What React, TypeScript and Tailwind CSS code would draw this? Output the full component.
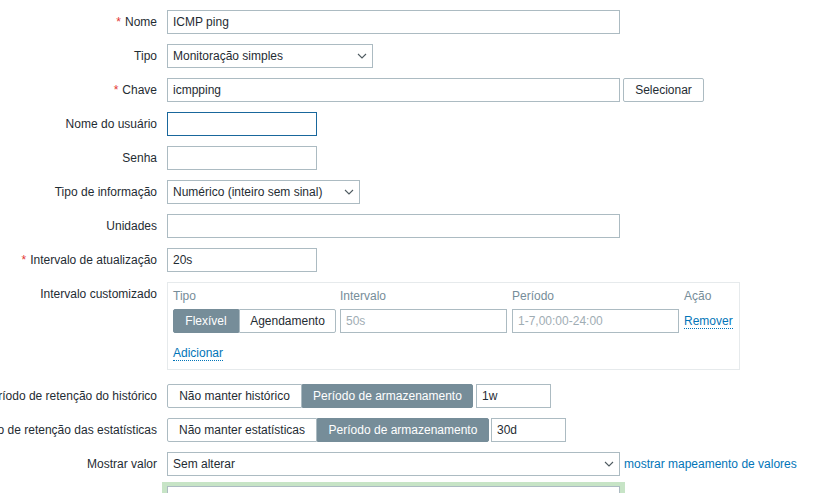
import { ReactNode } from "react";

const Label = ({ text, required }: { text: string; required?: boolean }) => (
  <div className="w-[157px] mr-[10px] h-6 shrink-0 flex items-center justify-end whitespace-nowrap">
    {required && <span className="text-[#e33734] mr-[4px]">*</span>}
    {text}
  </div>
);

const Row = ({ label, required, children, className = "" }: { label: string; required?: boolean; children?: ReactNode; className?: string }) => (
  <div className={`flex items-start ${className}`}>
    <Label text={label} required={required} />
    <div className="flex items-center">{children}</div>
  </div>
);

const TextBox = ({ value = "", w, focused, muted }: { value?: string; w: string; focused?: boolean; muted?: boolean }) => (
  <div
    className={`${w} h-6 bg-white flex items-center px-[5px] border ${
      focused ? "border-[#19679c]" : "border-[#acbbc2]"
    } ${muted ? "text-[#9fadb4]" : ""}`}
  >
    {value}
  </div>
);

const Chevron = () => (
  <svg width="10" height="6" viewBox="0 0 10 6" className="shrink-0">
    <path d="M1 1l4 4 4-4" fill="none" stroke="#4f5b61" strokeWidth="1.1" />
  </svg>
);

const SelectBox = ({ value, w }: { value: string; w: string }) => (
  <div className={`${w} h-6 bg-white border border-[#acbbc2] flex items-center justify-between pl-[5px] pr-[5px]`}>
    <span>{value}</span>
    <Chevron />
  </div>
);

const Segmented = ({ items, active, widths }: { items: string[]; active: number; widths: string[] }) => (
  <div className="flex h-6">
    {items.map((it, i) => (
      <div
        key={it}
        className={`${widths[i]} h-6 flex items-center justify-center border ${
          i === active ? "bg-[#768d99] border-[#768d99] text-white" : "bg-white border-[#acbbc2]"
        } ${i === 0 ? "rounded-l-[2px]" : ""} ${i === items.length - 1 ? "rounded-r-[2px]" : ""}`}
      >
        {it}
      </div>
    ))}
  </div>
);

const Link = ({ children }: { children: ReactNode }) => (
  <span className="text-[#0275b8] border-b border-dotted border-[#0275b8] leading-[14px]">{children}</span>
);

export default function App() {
  return (
    <div className="w-[834px] h-[493px] overflow-hidden bg-white font-['Liberation_Sans',Arial,sans-serif] text-[12px] text-[#1f2c33] pt-[10px] flex flex-col gap-[10px]">
      <Row label="Nome" required>
        <TextBox value="ICMP ping" w="w-[453px]" />
      </Row>
      <Row label="Tipo">
        <SelectBox value="Monitoração simples" w="w-[206px]" />
      </Row>
      <Row label="Chave" required>
        <TextBox value="icmpping" w="w-[453px]" />
        <div className="ml-[3px] w-[81px] h-6 border border-[#acbbc2] rounded-[2px] bg-white flex items-center justify-center">
          Selecionar
        </div>
      </Row>
      <Row label="Nome do usuário">
        <TextBox w="w-[150px]" focused />
      </Row>
      <Row label="Senha">
        <TextBox w="w-[150px]" />
      </Row>
      <Row label="Tipo de informação">
        <SelectBox value="Numérico (inteiro sem sinal)" w="w-[193px]" />
      </Row>
      <Row label="Unidades">
        <TextBox w="w-[453px]" />
      </Row>
      <Row label="Intervalo de atualização" required>
        <TextBox value="20s" w="w-[150px]" />
      </Row>

      {/* custom intervals table */}
      <div className="flex items-start mb-[4px]">
        <Label text="Intervalo customizado" />
        <div className="w-[573px] h-[88px] border border-[#e6eaec] p-[5px] flex flex-col">
          <div className="flex h-4 items-center text-[#768d99]">
            <div className="w-[167px]">Tipo</div>
            <div className="w-[172px]">Intervalo</div>
            <div className="w-[172px]">Período</div>
            <div>Ação</div>
          </div>
          <div className="flex items-center mt-[5px]">
            <div className="w-[167px]">
              <Segmented items={["Flexível", "Agendamento"]} active={0} widths={["w-[66px]", "w-[97px]"]} />
            </div>
            <div className="w-[172px]">
              <TextBox value="50s" w="w-[167px]" muted />
            </div>
            <div className="w-[172px]">
              <TextBox value="1-7,00:00-24:00" w="w-[167px]" muted />
            </div>
            <Link>Remover</Link>
          </div>
          <div className="mt-[11px]">
            <Link>Adicionar</Link>
          </div>
        </div>
      </div>

      <Row label="Período de retenção do histórico">
        <Segmented
          items={["Não manter histórico", "Período de armazenamento"]}
          active={1}
          widths={["w-[135px]", "w-[171px]"]}
        />
        <div className="ml-[3px]">
          <TextBox value="1w" w="w-[75px]" />
        </div>
      </Row>
      <Row label="Período de retenção das estatísticas">
        <Segmented
          items={["Não manter estatísticas", "Período de armazenamento"]}
          active={1}
          widths={["w-[150px]", "w-[172px]"]}
        />
        <div className="ml-[2px]">
          <TextBox value="30d" w="w-[75px]" />
        </div>
      </Row>
      <Row label="Mostrar valor">
        <SelectBox value="Sem alterar" w="w-[453px]" />
        <span className="ml-[4px] text-[#0275b8] whitespace-nowrap">mostrar mapeamento de valores</span>
      </Row>
      <div className="flex items-start">
        <div className="w-[157px] mr-[10px] shrink-0" />
        <div className="-ml-[5px] -mt-[4px] bg-[#c7e4c6] pl-[5px] pr-[5px] pt-[4px] pb-[4px]">
          <div className="w-[453px] h-[60px] bg-white border border-[#acbbc2]" />
        </div>
      </div>
    </div>
  );
}
